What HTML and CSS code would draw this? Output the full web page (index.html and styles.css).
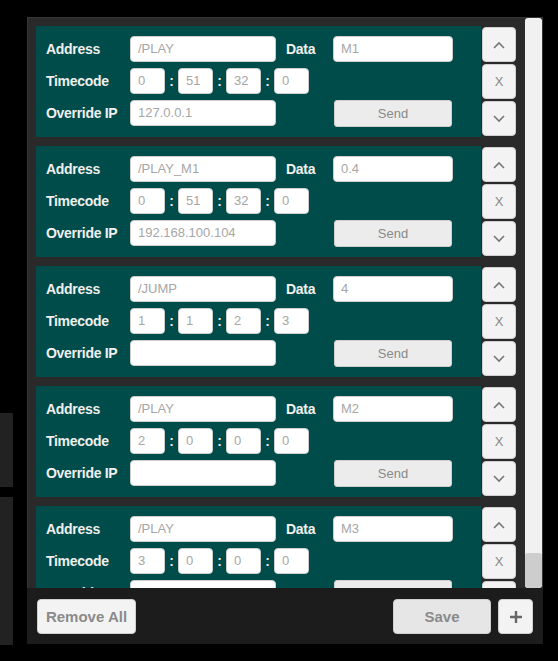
FILE: index.html
```html
<!DOCTYPE html>
<html>
<head>
<meta charset="utf-8">
<link rel="stylesheet" href="styles.css">
</head>
<body>
<div class="side">
  <div class="side-block b1"></div>
  <div class="side-block b2"></div>
</div>
<div class="panel">
  <div class="scroll">
    <div class="list">
      <div class="item">
        <div class="card">
          <div class="row">
            <span class="label">Address</span>
            <span class="input addr">/PLAY</span>
            <span class="label data-label">Data</span>
            <span class="input data">M1</span>
          </div>
          <div class="row">
            <span class="label">Timecode</span>
            <span class="input tc">0</span><span class="colon">:</span>
            <span class="input tc">51</span><span class="colon">:</span>
            <span class="input tc">32</span><span class="colon">:</span>
            <span class="input tc">0</span>
          </div>
          <div class="row">
            <span class="label">Override IP</span>
            <span class="input addr">127.0.0.1</span>
            <span class="send">Send</span>
          </div>
        </div>
        <div class="ctrls">
          <span class="btn"><svg width="14" height="8" viewBox="0 0 14 8"><path d="M2 7 L7 2 L12 7" fill="none" stroke="#777" stroke-width="1.6"/></svg></span>
          <span class="btn x">X</span>
          <span class="btn"><svg width="14" height="8" viewBox="0 0 14 8"><path d="M2 1 L7 6 L12 1" fill="none" stroke="#777" stroke-width="1.6"/></svg></span>
        </div>
      </div>

      <div class="item">
        <div class="card">
          <div class="row">
            <span class="label">Address</span>
            <span class="input addr">/PLAY_M1</span>
            <span class="label data-label">Data</span>
            <span class="input data">0.4</span>
          </div>
          <div class="row">
            <span class="label">Timecode</span>
            <span class="input tc">0</span><span class="colon">:</span>
            <span class="input tc">51</span><span class="colon">:</span>
            <span class="input tc">32</span><span class="colon">:</span>
            <span class="input tc">0</span>
          </div>
          <div class="row">
            <span class="label">Override IP</span>
            <span class="input addr">192.168.100.104</span>
            <span class="send">Send</span>
          </div>
        </div>
        <div class="ctrls">
          <span class="btn"><svg width="14" height="8" viewBox="0 0 14 8"><path d="M2 7 L7 2 L12 7" fill="none" stroke="#777" stroke-width="1.6"/></svg></span>
          <span class="btn x">X</span>
          <span class="btn"><svg width="14" height="8" viewBox="0 0 14 8"><path d="M2 1 L7 6 L12 1" fill="none" stroke="#777" stroke-width="1.6"/></svg></span>
        </div>
      </div>

      <div class="item">
        <div class="card">
          <div class="row">
            <span class="label">Address</span>
            <span class="input addr">/JUMP</span>
            <span class="label data-label">Data</span>
            <span class="input data">4</span>
          </div>
          <div class="row">
            <span class="label">Timecode</span>
            <span class="input tc">1</span><span class="colon">:</span>
            <span class="input tc">1</span><span class="colon">:</span>
            <span class="input tc">2</span><span class="colon">:</span>
            <span class="input tc">3</span>
          </div>
          <div class="row">
            <span class="label">Override IP</span>
            <span class="input addr"></span>
            <span class="send">Send</span>
          </div>
        </div>
        <div class="ctrls">
          <span class="btn"><svg width="14" height="8" viewBox="0 0 14 8"><path d="M2 7 L7 2 L12 7" fill="none" stroke="#777" stroke-width="1.6"/></svg></span>
          <span class="btn x">X</span>
          <span class="btn"><svg width="14" height="8" viewBox="0 0 14 8"><path d="M2 1 L7 6 L12 1" fill="none" stroke="#777" stroke-width="1.6"/></svg></span>
        </div>
      </div>

      <div class="item">
        <div class="card">
          <div class="row">
            <span class="label">Address</span>
            <span class="input addr">/PLAY</span>
            <span class="label data-label">Data</span>
            <span class="input data">M2</span>
          </div>
          <div class="row">
            <span class="label">Timecode</span>
            <span class="input tc">2</span><span class="colon">:</span>
            <span class="input tc">0</span><span class="colon">:</span>
            <span class="input tc">0</span><span class="colon">:</span>
            <span class="input tc">0</span>
          </div>
          <div class="row">
            <span class="label">Override IP</span>
            <span class="input addr"></span>
            <span class="send">Send</span>
          </div>
        </div>
        <div class="ctrls">
          <span class="btn"><svg width="14" height="8" viewBox="0 0 14 8"><path d="M2 7 L7 2 L12 7" fill="none" stroke="#777" stroke-width="1.6"/></svg></span>
          <span class="btn x">X</span>
          <span class="btn"><svg width="14" height="8" viewBox="0 0 14 8"><path d="M2 1 L7 6 L12 1" fill="none" stroke="#777" stroke-width="1.6"/></svg></span>
        </div>
      </div>

      <div class="item">
        <div class="card">
          <div class="row">
            <span class="label">Address</span>
            <span class="input addr">/PLAY</span>
            <span class="label data-label">Data</span>
            <span class="input data">M3</span>
          </div>
          <div class="row">
            <span class="label">Timecode</span>
            <span class="input tc">3</span><span class="colon">:</span>
            <span class="input tc">0</span><span class="colon">:</span>
            <span class="input tc">0</span><span class="colon">:</span>
            <span class="input tc">0</span>
          </div>
          <div class="row">
            <span class="label">Override IP</span>
            <span class="input addr"></span>
            <span class="send">Send</span>
          </div>
        </div>
        <div class="ctrls">
          <span class="btn"><svg width="14" height="8" viewBox="0 0 14 8"><path d="M2 7 L7 2 L12 7" fill="none" stroke="#777" stroke-width="1.6"/></svg></span>
          <span class="btn x">X</span>
          <span class="btn"><svg width="14" height="8" viewBox="0 0 14 8"><path d="M2 1 L7 6 L12 1" fill="none" stroke="#777" stroke-width="1.6"/></svg></span>
        </div>
      </div>
    </div>
    <div class="scrollbar"><div class="thumb"></div></div>
  </div>
  <div class="footer">
    <span class="fbtn remove">Remove All</span>
    <span class="spacer"></span>
    <span class="fbtn save">Save</span>
    <span class="fbtn plus"><svg width="14" height="14" viewBox="0 0 14 14"><path d="M7 1 V13 M1 7 H13" stroke="#666" stroke-width="2.4"/></svg></span>
  </div>
</div>
</body>
</html>
```
FILE: styles.css
```css
* { box-sizing: border-box; }
html, body { margin: 0; padding: 0; }
body {
  width: 558px;
  height: 661px;
  background: #000;
  overflow: hidden;
  display: flex;
  align-items: flex-start;
  font-family: "Liberation Sans", Arial, sans-serif;
}
.side {
  width: 13px;
  padding-top: 413px;
  display: flex;
  flex-direction: column;
  gap: 10px;
}
.side-block { background: #222; }
.b1 { height: 74px; }
.b2 { height: 148px; }

.panel {
  margin-left: 14px;
  margin-top: 17px;
  width: 516px;
  height: 627px;
  background: #2a2a2a;
  box-shadow: inset 1px 1px 0 #363636, inset -1px 0 0 #363636;
  display: flex;
  flex-direction: column;
}
.scroll {
  height: 571px;
  display: flex;
}
.list {
  flex: 1;
  overflow: hidden;
  padding: 9px 9px 0 9px;
  display: flex;
  flex-direction: column;
  gap: 9px;
}
.item {
  flex: none;
  height: 111px;
  display: flex;
  gap: 1px;
}
.card {
  width: 445px;
  background: #004c4a;
  padding: 10px 0 0 10px;
  display: flex;
  flex-direction: column;
  gap: 6px;
}
.row {
  height: 26px;
  display: flex;
  align-items: center;
}
.label {
  width: 84px;
  color: #f0f0f0;
  font-weight: bold;
  font-size: 14px;
  letter-spacing: -0.3px;
}
.data-label { width: 47px; margin-left: 10px; }
.input {
  height: 26px;
  background: #fff;
  border: 1px solid #cdcdcd;
  border-radius: 4px;
  color: #a6a6a6;
  font-size: 13px;
  padding-left: 7px;
  line-height: 24px;
  white-space: nowrap;
}
.addr { width: 146px; }
.data { width: 120px; }
.tc { width: 35px; }
.colon {
  width: 13px;
  text-align: center;
  color: #e8e8e8;
  font-weight: bold;
  font-size: 14px;
}
.send {
  margin-left: 58px;
  width: 118px;
  height: 27px;
  background: #ececec;
  border: 1px solid #cfcfcf;
  border-radius: 3px;
  color: #8a8a8a;
  font-size: 13px;
  display: flex;
  align-items: center;
  justify-content: center;
}
.ctrls {
  width: 34px;
  padding: 1px 0;
  display: flex;
  flex-direction: column;
  gap: 2px;
}
.btn {
  flex: 1;
  background: #f3f3f3;
  border: 1px solid #d0d0d0;
  border-radius: 4px;
  display: flex;
  align-items: center;
  justify-content: center;
  color: #888;
  font-size: 13px;
}
.scrollbar {
  width: 17px;
  margin-right: 1px;
  margin-top: 1px;
  background: #f1f1f1;
  border-radius: 3px;
  display: flex;
  flex-direction: column;
  justify-content: flex-end;
  overflow: hidden;
}
.thumb {
  height: 35px;
  background: #cdcdcd;
  border-radius: 3px;
}
.footer {
  height: 56px;
  background: #1c1c1c;
  padding: 11px 10px 0 10px;
  display: flex;
  align-items: flex-start;
  gap: 7px;
}
.spacer { flex: 1; }
.fbtn {
  height: 35px;
  border: 1px solid #cfcfcf;
  border-radius: 4px;
  display: flex;
  align-items: center;
  justify-content: center;
  color: #8a8a8a;
  font-weight: bold;
  font-size: 15px;
  line-height: 18px;
}
.remove { width: 99px; background: #f3f3f3; }
.save { width: 98px; background: #e6e6e6; }
.plus { width: 35px; background: #f3f3f3; }
```
